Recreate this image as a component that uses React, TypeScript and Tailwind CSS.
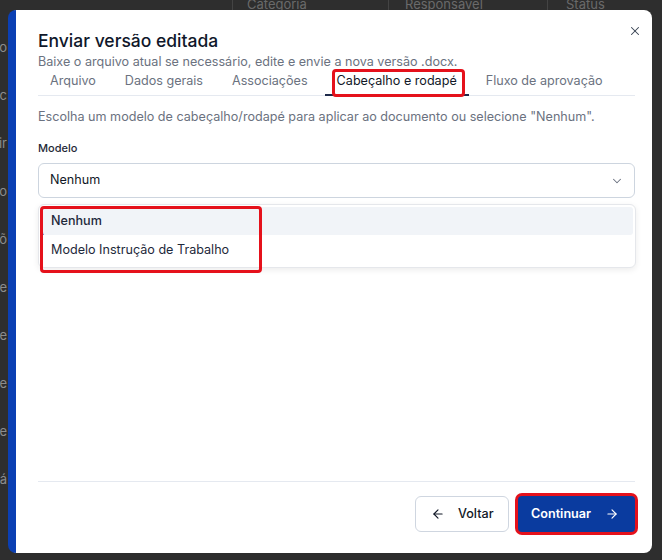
import React from "react";
import { X, ChevronDown, ArrowLeft, ArrowRight } from "lucide-react";

const edgeWords = ["o", "c", "ir", "o", "õ", "e", "e", "e", "e", "á"];

const tabs = ["Arquivo", "Dados gerais", "Associações", "Cabeçalho e rodapé", "Fluxo de aprovação"];

export default function App() {
  return (
    <div className="relative h-[560px] w-[662px] overflow-hidden bg-[#2e2e2e] font-['Inter',sans-serif]">
      {/* page under the dialog overlay */}
      <div className="flex h-full">
        <div className="flex w-[7px] flex-col overflow-hidden pt-[37px] text-[13px] text-[#8c8c8c]">
          {edgeWords.map((w, i) => (
            <div key={i} className="flex h-[48px] shrink-0 justify-end whitespace-nowrap leading-[20px]">
              {w}
            </div>
          ))}
        </div>
        <div className="flex h-[12px] flex-1 items-start pl-[225px] text-[13px] leading-[12px] text-[#6a6a6a]">
          <div className="-mt-[2px] w-[156px] border-l border-[#444] pl-[14px]">Categoria</div>
          <div className="-mt-[2px] w-[159px] border-l border-[#444] pl-[16px]">Responsável</div>
          <div className="-mt-[2px] w-[100px] border-l border-[#444] pl-[18px]">Status</div>
        </div>
      </div>

      {/* dialog */}
      <div className="absolute left-[8px] top-[10px] flex h-[543px] w-[644px] flex-col rounded-[8px] border-l-[8px] border-[#0b3fb3] bg-white">
        <div className="relative flex-1 pl-[22px] pr-[17px] pt-[17px]">
          <button className="absolute right-[10px] top-[14px] text-[#374151]">
            <X size={14} strokeWidth={1.8} />
          </button>
          <h2 className="text-[17.5px] font-medium leading-[28px] text-[#0f172a]">Enviar versão editada</h2>
          <p className="-mt-[2px] text-[12.6px] leading-[18px] text-[#6b7280]">
            Baixe o arquivo atual se necessário, edite e envie a nova versão .docx.
          </p>

          {/* tabs */}
          <div className="flex gap-[5px] border-b border-[#e5e9f0] whitespace-nowrap">
            {tabs.map((t, i) => {
              const active = i === 3;
              return (
                <div
                  key={t}
                  className={
                    active
                      ? "relative -mb-px border-b-2 border-[#1e2a4a] px-[12px] pb-[3px] text-[12.6px] leading-[20px] text-[#111827]"
                      : "-mb-px border-b-2 border-transparent px-[12px] pb-[3px] text-[12.6px] leading-[20px] text-[#6b7280]"
                  }
                >
                  {t}
                  {active && (
                    <span className="pointer-events-none absolute -top-[2px] left-[7px] h-[28px] w-[133px] rounded-[4px] border-[3px] border-[#e5111b]" />
                  )}
                </div>
              );
            })}
          </div>

          <p className="mt-[11px] text-[12.6px] leading-[20px] text-[#6b7280]">
            Escolha um modelo de cabeçalho/rodapé para aplicar ao documento ou selecione "Nenhum".
          </p>

          <div className="mt-[11px] text-[11px] font-medium leading-[20px] text-[#1f2937]">Modelo</div>

          {/* select with open listbox */}
          <div className="relative mt-[5px]">
            <div className="flex h-[35px] items-center justify-between rounded-[6px] border border-[#cdd5df] pl-[11px] pr-[10px]">
              <span className="text-[12.6px] text-[#111827]">Nenhum</span>
              <ChevronDown size={14} strokeWidth={1.8} className="text-[#6b7280]" />
            </div>
            <div className="absolute left-0 right-[-1px] top-[41px] rounded-[6px] border border-[#e5e7eb] bg-white p-[2px] shadow-[0_2px_6px_rgba(0,0,0,0.08)]">
              <div className="flex h-[28px] items-center rounded-[3px] border-l-2 border-[#3f3f9a] bg-[#f1f4f8] pl-[8px] text-[12.6px] font-medium text-[#1e293b]">
                Nenhum
              </div>
              <div className="flex h-[30px] items-center pl-[10px] text-[12.6px] text-[#1e293b]">
                Modelo Instrução de Trabalho
              </div>
              <span className="pointer-events-none absolute left-[1px] top-[1px] h-[67px] w-[222px] rounded-[4px] border-[3px] border-[#e5111b]" />
            </div>
          </div>
        </div>

        {/* footer */}
        <div className="ml-[22px] mr-[17px] flex justify-end gap-[9px] border-t border-[#e5e9f0] pb-[21px] pt-[14px]">
          <button className="flex h-[36px] w-[94px] items-center gap-[13px] rounded-[6px] border border-[#cfd6e0] bg-white pl-[15px] text-[12.6px] font-medium text-[#111827]">
            <ArrowLeft size={14} strokeWidth={2} />
            Voltar
          </button>
          <button className="flex h-[36px] w-[117px] items-center justify-between rounded-[4px] bg-[#0a3b9f] pl-[13px] pr-[16px] text-[12.6px] font-semibold text-white ring-[3px] ring-[#e5111b]">
            Continuar
            <ArrowRight size={14} strokeWidth={2} />
          </button>
        </div>
      </div>
    </div>
  );
}
